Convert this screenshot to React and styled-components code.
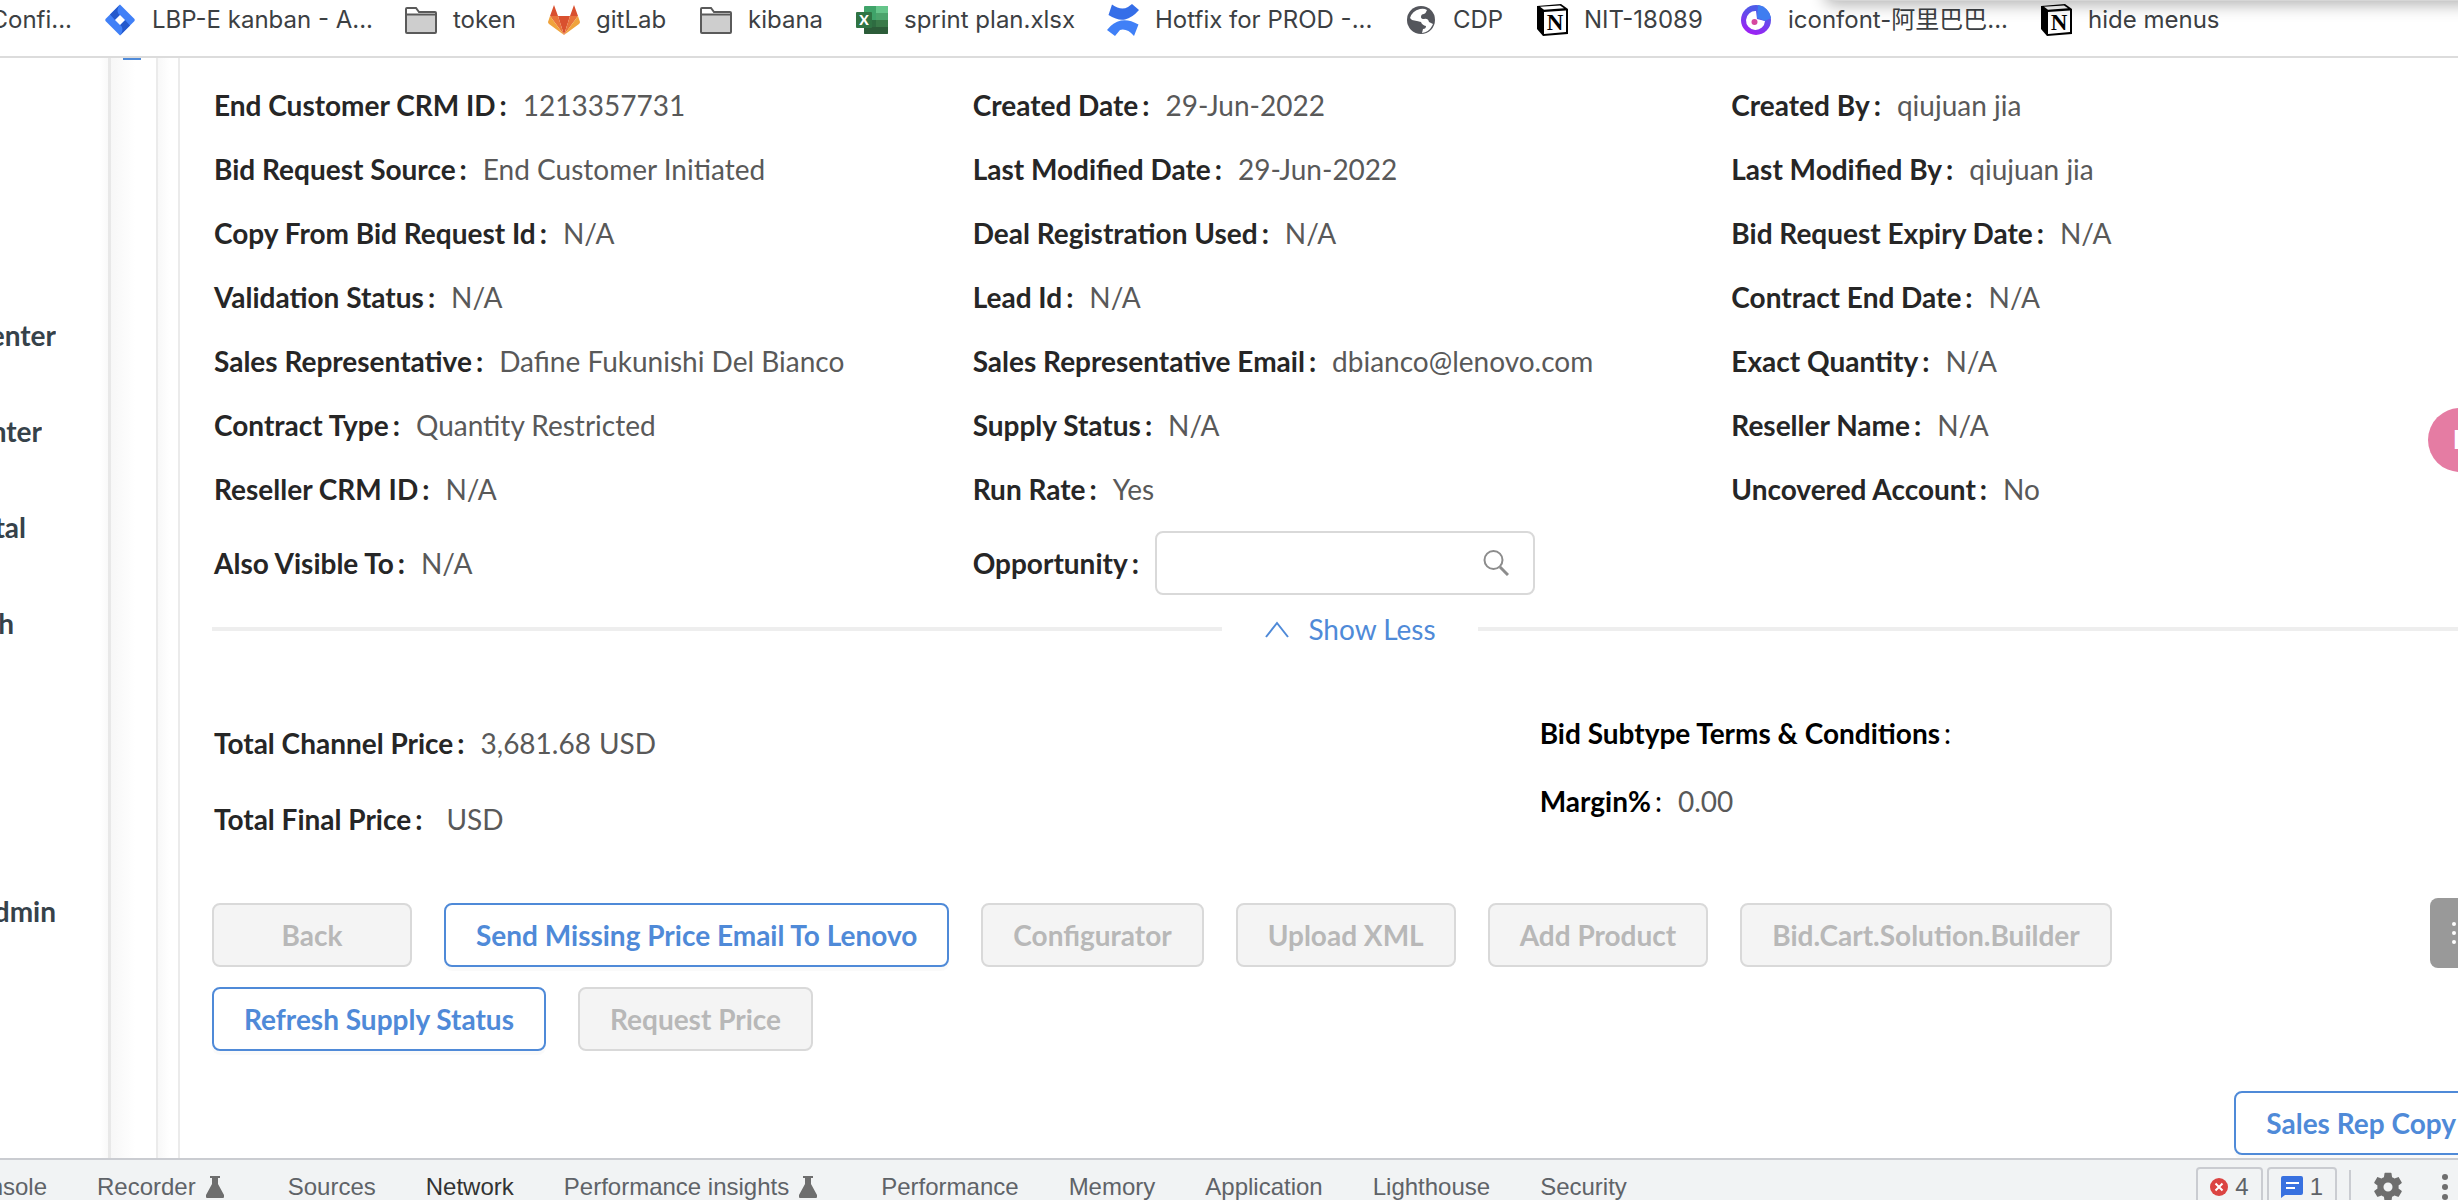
import styled, { createGlobalStyle } from "styled-components";

const GlobalStyle = createGlobalStyle`
  * {
    box-sizing: border-box;
  }

  body {
    margin: 0;
    background: #fff;
    font-family: Lato, "Noto Sans CJK SC", sans-serif;
    font-size: 28px;
    overflow: hidden;
  }
`;

const Shell = styled.div`
  position: relative;
  display: flex;
  flex-direction: column;
  height: 100vh;
  overflow: hidden;
`;

/* bookmarks */

const BookmarkBar = styled.nav`
  display: flex;
  flex: none;
  gap: 32px;
  height: 58px;
  padding-bottom: 16px;
  border-bottom: 2px solid #dcdcdc;
  overflow: hidden;
`;

const BookmarkLink = styled.a`
  display: flex;
  flex: none;
  align-items: center;
  gap: 16px;
  width: ${(props) => props.$width}px;
  color: #3c4043;
  font-family: Inter, "Noto Sans CJK SC", sans-serif;
  font-size: 24px;
  line-height: 40px;
  text-decoration: none;
  white-space: nowrap;

  svg {
    flex: none;
    width: 32px;
    height: 32px;
  }
`;

const BookmarkText = styled.span`
  display: flex;
  justify-content: flex-end;
  width: ${(props) => (props.$clipped ? "100%" : "auto")};
`;

const PopupShadow = styled.div`
  position: absolute;
  top: -20px;
  right: -20px;
  left: 1824px;
  height: 21px;
  border-radius: 12px;
  background: #d6d6d6;
  box-shadow: 0 4px 16px rgba(0, 0, 0, 0.3);
`;

/* page */

const Page = styled.div`
  display: flex;
  flex: 1;
  min-height: 0;
  overflow: hidden;
`;

const Sidebar = styled.aside`
  flex: none;
  width: 108px;
  padding-top: 229px;
  background: linear-gradient(to right, #fff 100px, #f9f9f9);
`;

const SidebarLink = styled.a`
  display: flex;
  align-items: center;
  justify-content: flex-end;
  width: ${(props) => props.$end}px;
  height: 96px;
  margin-bottom: ${(props) => (props.$last ? 192 : 0)}px;
  overflow: hidden;
  color: #36424a;
  font-weight: 700;
  text-decoration: none;
`;

const Gutter = styled.div`
  flex: none;
  width: 48px;
  padding-left: 12px;
  border-left: 3px solid #e8e8e8;
  background: linear-gradient(to right, #f7f7f7, #fff 24px);
`;

const GutterMark = styled.div`
  width: 18px;
  height: 2px;
  background: #4f8ad8;
`;

const CardEdge = styled.div`
  flex: none;
  width: 22px;
  border-left: 2px solid #ebebeb;
  background: linear-gradient(to right, #f8f8f8, #fff 12px);
`;

const Content = styled.main`
  flex: 1;
  min-width: 0;
  margin-right: -30px;
  padding: 15px 0 0 32px;
  border-left: 2px solid #ebebeb;
`;

const FieldGrid = styled.dl`
  display: grid;
  grid-template-columns: repeat(3, 1fr);
  margin: 0;
`;

const FieldRow = styled.div`
  display: flex;
  align-items: center;
  height: 64px;
  margin-top: ${(props) => (props.$spaced ? 10 : 0)}px;
  padding-left: ${(props) => (props.$flush ? 0 : 2)}px;
  white-space: nowrap;
`;

const FieldLabel = styled.dt`
  color: ${(props) => (props.$dark ? "#000" : "#262626")};
  font-weight: 700;
`;

const Colon = styled.span`
  margin: 0 16px 0 4px;
  font-weight: ${(props) => (props.$light ? 400 : 700)};
`;

const FieldValue = styled.dd`
  margin: 0;
  color: #595959;
`;

const Unit = styled.span`
  margin-left: 8px;
`;

const SearchBox = styled.div`
  display: flex;
  align-items: center;
  width: 380px;
  height: 64px;
  padding-right: 24px;
  border: 2px solid #d9d9d9;
  border-radius: 8px;
`;

const SearchInput = styled.input`
  flex: 1;
  min-width: 0;
  height: 100%;
  padding: 0 20px;
  border: 0;
  outline: 0;
  background: none;
  font: inherit;
`;

const Divider = styled.div`
  display: flex;
  align-items: center;
  gap: 42px;
  height: 68px;

  &::before,
  &::after {
    content: "";
    flex: 1;
    height: 4px;
    background: #eee;
  }
`;

const ToggleButton = styled.button`
  display: flex;
  align-items: center;
  gap: 18px;
  padding: 0;
  border: 0;
  background: none;
  color: #4f8ad8;
  font: inherit;
`;

const Totals = styled.dl`
  display: grid;
  grid-template-columns: 7fr 5fr;
  margin: 38px 0 0;
`;

const TotalsColumn = styled.div`
  display: flex;
  flex-direction: column;
  gap: ${(props) => props.$gap}px;
`;

const Actions = styled.div`
  display: flex;
  flex-wrap: wrap;
  gap: 20px 32px;
  max-width: 1960px;
  margin-top: 52px;
`;

const ActionButton = styled.button`
  min-width: 200px;
  height: 64px;
  padding: 0 30px;
  border: 2px solid #4f8ad8;
  border-radius: 8px;
  background: #fff;
  box-shadow: 0 4px 0 rgba(0, 0, 0, 0.02);
  color: #4f8ad8;
  font: inherit;
  font-weight: 700;
  white-space: nowrap;

  &:disabled {
    border-color: #d9d9d9;
    background: #f4f4f4;
    box-shadow: none;
    color: #b8b8b8;
  }
`;

const CopyRow = styled.div`
  display: flex;
  justify-content: flex-end;
  margin-top: 40px;
`;

const Avatar = styled.button`
  position: absolute;
  top: 408px;
  right: -34px;
  width: 64px;
  height: 64px;
  padding: 0 0 0 25px;
  border: 0;
  border-radius: 50%;
  background: #e57ca3;
  color: #fff;
  font: 700 28px "Liberation Sans", sans-serif;
  text-align: left;
`;

const DragTab = styled.button`
  position: absolute;
  top: 898px;
  right: -20px;
  display: flex;
  align-items: center;
  width: 48px;
  height: 70px;
  padding: 0 0 0 20px;
  border: 0;
  border-radius: 8px;
  background: #999;
`;

/* devtools */

const DevTools = styled.footer`
  display: flex;
  flex: none;
  height: 42px;
  border-top: 2px solid #caccd1;
  background: #f1f3f4;
  color: #5f6368;
  font-family: "Liberation Sans", sans-serif;
  font-size: 24px;
  overflow: hidden;
`;

const DevTab = styled.button`
  display: flex;
  flex: none;
  align-items: center;
  justify-content: ${(props) => (props.$width ? "flex-end" : "flex-start")};
  gap: 10px;
  width: ${(props) => (props.$width ? `${props.$width}px` : "auto")};
  height: 54px;
  padding: 0 25px;
  border: 0;
  background: none;
  color: ${(props) => (props.$active ? "#333" : "#5f6368")};
  font: inherit;
  white-space: nowrap;
  overflow: hidden;

  svg {
    margin-right: 14px;
  }
`;

const DevToolsStatus = styled.div`
  display: flex;
  align-items: center;
  gap: 4px;
  height: 54px;
  margin-left: auto;
  padding-right: 9px;
`;

const Counter = styled.button`
  display: flex;
  align-items: center;
  gap: 7px;
  height: 40px;
  padding: 0 12px;
  border: 2px solid #caccd1;
  border-radius: 4px;
  background: none;
  color: #5f6368;
  font: inherit;
`;

const Separator = styled.div`
  width: 2px;
  height: 34px;
  margin: 0 16px 0 8px;
  background: #caccd1;
`;

const IconGroup = styled.div`
  display: flex;
  align-items: center;
  gap: 36px;
`;

const IconButton = styled.button`
  display: flex;
  padding: 0;
  border: 0;
  background: none;
`;

const JiraIcon = () => (
  <svg viewBox="0 0 32 32">
    <path d="M16 0.500 L30.500 15 Q31 16 30.500 17 L16 31.500 L1.500 17 Q1 16 1.500 15 Z" fill="#4080f7" />
    <path d="M16 0.500 C12.500 5 13 9 16 11 L11 16 L6 10.500 Z" fill="#2459cc" />
    <path d="M16 31.500 C19.500 27 19 23 16 21 L21 16 L26 21.500 Z" fill="#2459cc" />
    <path d="M16 11l5 5-5 5-5-5z" fill="#fff" />
  </svg>
);

const FolderIcon = () => (
  <svg viewBox="0 0 32 32">
    <path d="M1 28V5q0-1 1-1h9l3 4h16q1 0 1 1v19q0 1-1 1H2q-1 0-1-1z" fill="#fff" stroke="#5a5a5a" strokeWidth="2" />
    <path d="M2 11h28v17H2z" fill="#cecece" />
    <path d="M1 10.500h30" stroke="#5a5a5a" strokeWidth="2" />
  </svg>
);

const GitlabIcon = () => (
  <svg viewBox="0 0 32 32">
    <path d="M16 31L10 12h12z" fill="#d9502f" />
    <path d="M16 31L2 12h8zM16 31l14-19h-8z" fill="#e9743a" />
    <path d="M2 12L0 18q0 1 1 2l15 11zM30 12l2 6q0 1-1 2L16 31z" fill="#f0a33c" />
    <path d="M2 12L6 1l4 11zM30 12L26 1l-4 11z" fill="#d9502f" />
  </svg>
);

const ExcelIcon = () => (
  <svg viewBox="0 0 32 32">
    <rect x="8" y="2" width="24" height="28" rx="1" fill="#3fa369" />
    <path d="M20 2h11q1 0 1 1v6H20z" fill="#65c58a" />
    <path d="M20 9h12v7H20z" fill="#4ca46c" />
    <path d="M8 16h12v7H8z" fill="#2e6c41" />
    <path d="M20 16h12v7H20z" fill="#3a7a49" />
    <path d="M8 23h24v6q0 1-1 1H9q-1 0-1-1z" fill="#2c5c39" />
    <rect x="0" y="8" width="16" height="16" rx="1" fill="#2f7444" />
    <text x="8" y="21" fill="#fff" fontFamily="Lato, sans-serif" fontSize="14" fontWeight="900" textAnchor="middle">
      X
    </text>
  </svg>
);

const ConfluenceIcon = () => (
  <svg viewBox="0 0 32 32">
    <path d="M5 0.500 Q14 7 21 3 L25 0 L32 6 Q25 14 18 15.500 Q11 17 1.500 11 Z" fill="#356ee8" />
    <path d="M27 32 Q20 24 13 26 L8 32 L0 26 Q6 18 14 16.500 Q22 15 31.500 20.500 Z" fill="#4080f7" />
  </svg>
);

const GlobeIcon = () => (
  <svg viewBox="0 0 32 32">
    <circle cx="16" cy="16" r="14" fill="#54565c" />
    <path d="M15 5q4-1 7 1-1 3-3 4-3 0-3 3 0 2 3 2 4-1 5 3l4 2-1 2q-3 6-10 7l1-4q3 0 3-3-4-1-5-4-4-1-9-2L5 14q2-7 10-9z" fill="#fff" />
    <path d="M6 17l8 1 2 4q-1 2-2 5-7-2-8-10z" fill="#54565c" />
  </svg>
);

const NotionIcon = () => (
  <svg viewBox="0 0 32 32">
    <path d="M1 2L25 0l7 5v25L7 32l-6-7z" fill="#000" />
    <path d="M4 2.800L24 1.400l4 2.800L8 5.800zM8 8l22-1.400V28L8 30z" fill="#fff" />
    <text x="19" y="26" fill="#000" fontFamily="Liberation Serif, serif" fontSize="23" fontWeight="700" textAnchor="middle">
      N
    </text>
  </svg>
);

const IconfontIcon = () => (
  <svg viewBox="0 0 32 32">
    <defs>
      <linearGradient id="ring" x1="0.7" y1="0" x2="0.3" y2="1">
        <stop offset="0.2" stopColor="#4e5be8" />
        <stop offset="1" stopColor="#a31cf5" />
      </linearGradient>
    </defs>
    <circle cx="16" cy="16" r="15" fill="url(#ring)" />
    <path d="M16 7a9.500 9.500 0 1 0 9 10l-8-2z" fill="#fff" />
    <path d="M18 1q11 2 13 13l-6 3-8-3z" fill="#3f7df0" />
    <circle cx="14.500" cy="18" r="3" fill="#d6479f" />
  </svg>
);

const FlaskIcon = () => (
  <svg width="18" height="22" viewBox="0 0 18 22">
    <path d="M4 0h10v2h-2v6l6 11v2q0 1-1 1H1q-1 0-1-1v-2L6 8V2H4z" fill="#6e6e6e" />
  </svg>
);

const SearchIcon = () => (
  <svg width="26" height="26" viewBox="0 0 26 26" fill="none" stroke="#8c8c8c" strokeWidth="2">
    <circle cx="10.500" cy="10" r="9" />
    <path d="M17 17l8 8" strokeWidth="3" />
  </svg>
);

const ChevronUp = () => (
  <svg width="26" height="20" viewBox="0 0 26 20" fill="none" stroke="#4f8ad8" strokeWidth="2">
    <path d="M2 18L13 4l11 14" />
  </svg>
);

const ErrorIcon = () => (
  <svg width="18" height="18" viewBox="0 0 18 18">
    <circle cx="9" cy="9" r="9" fill="#db4442" />
    <path d="M5.500 5.500l7 7m0-7l-7 7" stroke="#fff" strokeWidth="2" />
  </svg>
);

const IssueIcon = () => (
  <svg width="22" height="22" viewBox="0 0 22 22">
    <path d="M2 0h18q2 0 2 2v15q0 2-2 2H4l-4 3V2q0-2 2-2z" fill="#3871e0" />
    <path d="M5 7h13M5 12h9" stroke="#fff" strokeWidth="2" />
  </svg>
);

const GearIcon = () => (
  <svg width="34" height="34" viewBox="0 0 24 24">
    <path
      fill="#6e6e6e"
      d="M19.430 12.980c.04-.32.07-.64.07-.98s-.03-.66-.07-.98l2.110-1.650c.19-.15.24-.42.12-.64l-2-3.460c-.12-.22-.39-.3-.61-.22l-2.490 1c-.52-.4-1.080-.73-1.690-.98l-.38-2.650A.488.488 0 0 0 14 2h-4c-.25 0-.46.18-.49.42l-.38 2.650c-.61.25-1.170.59-1.690.98l-2.490-1c-.23-.09-.49 0-.61.22l-2 3.460c-.13.22-.07.49.12.64l2.110 1.650c-.04.32-.07.65-.07.98s.03.66.07.98l-2.110 1.650c-.19.15-.24.42-.12.64l2 3.460c.12.22.39.3.61.22l2.490-1c.52.4 1.080.73 1.690.98l.38 2.650c.03.24.24.42.49.42h4c.25 0 .46-.18.49-.42l.38-2.650c.61-.25 1.170-.59 1.690-.98l2.490 1c.23.09.49 0 .61-.22l2-3.460c.12-.22.07-.49-.12-.64l-2.110-1.650zM12 15.200a3.200 3.200 0 1 1 0-6.400 3.200 3.200 0 0 1 0 6.400z"
    />
  </svg>
);

const MoreIcon = () => (
  <svg width="8" height="28" viewBox="0 0 8 28" fill="#6e6e6e">
    <circle cx="4" cy="4" r="3" />
    <circle cx="4" cy="14" r="3" />
    <circle cx="4" cy="24" r="3" />
  </svg>
);

const DotsIcon = () => (
  <svg width="8" height="24" viewBox="0 0 8 24" fill="#fff">
    <circle cx="4" cy="3" r="2" />
    <circle cx="4" cy="12" r="2" />
    <circle cx="4" cy="21" r="2" />
  </svg>
);

const bookmarks = [
  { text: "Confi...", width: 72, clipped: true },
  { text: "LBP-E kanban - A...", icon: JiraIcon, width: 269 },
  { text: "token", icon: FolderIcon, width: 111 },
  { text: "gitLab", icon: GitlabIcon, width: 120 },
  { text: "kibana", icon: FolderIcon, width: 124 },
  { text: "sprint plan.xlsx", icon: ExcelIcon, width: 219 },
  { text: "Hotfix for PROD -...", icon: ConfluenceIcon, width: 266 },
  { text: "CDP", icon: GlobeIcon, width: 99 },
  { text: "NIT-18089", icon: NotionIcon, width: 172 },
  { text: "iconfont-阿里巴巴...", icon: IconfontIcon, width: 268 },
  { text: "hide menus", icon: NotionIcon, width: 180 },
];

const sidebarLinks = [
  { text: "enter", end: 56 },
  { text: "nter", end: 42 },
  { text: "tal", end: 26 },
  { text: "h", end: 14, last: true },
  { text: "dmin", end: 56 },
];

const fields = [
  ["End Customer CRM ID", "1213357731"],
  ["Created Date", "29-Jun-2022"],
  ["Created By", "qiujuan jia"],
  ["Bid Request Source", "End Customer Initiated"],
  ["Last Modified Date", "29-Jun-2022"],
  ["Last Modified By", "qiujuan jia"],
  ["Copy From Bid Request Id", "N/A"],
  ["Deal Registration Used", "N/A"],
  ["Bid Request Expiry Date", "N/A"],
  ["Validation Status", "N/A"],
  ["Lead Id", "N/A"],
  ["Contract End Date", "N/A"],
  ["Sales Representative", "Dafine Fukunishi Del Bianco"],
  ["Sales Representative Email", "dbianco@lenovo.com"],
  ["Exact Quantity", "N/A"],
  ["Contract Type", "Quantity Restricted"],
  ["Supply Status", "N/A"],
  ["Reseller Name", "N/A"],
  ["Reseller CRM ID", "N/A"],
  ["Run Rate", "Yes"],
  ["Uncovered Account", "No"],
];

const actions = [
  { text: "Back", disabled: true },
  { text: "Send Missing Price Email To Lenovo" },
  { text: "Configurator", disabled: true },
  { text: "Upload XML", disabled: true },
  { text: "Add Product", disabled: true },
  { text: "Bid.Cart.Solution.Builder", disabled: true },
  { text: "Refresh Supply Status" },
  { text: "Request Price", disabled: true },
];

const devTabs = [
  { text: "nsole", width: 72 },
  { text: "Recorder", flask: true },
  { text: "Sources" },
  { text: "Network", active: true },
  { text: "Performance insights", flask: true },
  { text: "Performance" },
  { text: "Memory" },
  { text: "Application" },
  { text: "Lighthouse" },
  { text: "Security" },
];

const Field = ({ label, value, unit, dark, spaced }) => {
  return (
    <FieldRow $spaced={spaced} $flush={dark}>
      <FieldLabel $dark={dark}>
        {label}
        <Colon $light={dark}>:</Colon>
      </FieldLabel>
      <FieldValue>
        {value}
        {unit && <Unit>{unit}</Unit>}
      </FieldValue>
    </FieldRow>
  );
};

const Bookmark = ({ bookmark }) => {
  const Icon = bookmark.icon;
  return (
    <BookmarkLink href="#" $width={bookmark.width}>
      {Icon && <Icon />}
      <BookmarkText $clipped={bookmark.clipped}>{bookmark.text}</BookmarkText>
    </BookmarkLink>
  );
};

const App = () => {
  return (
    <Shell>
      <GlobalStyle />
      <BookmarkBar>
        {bookmarks.map((bookmark) => (
          <Bookmark key={bookmark.text} bookmark={bookmark} />
        ))}
      </BookmarkBar>
      <PopupShadow />

      <Page>
        <Sidebar>
          {sidebarLinks.map((link) => (
            <SidebarLink key={link.text} href="#" $end={link.end} $last={link.last}>
              {link.text}
            </SidebarLink>
          ))}
        </Sidebar>
        <Gutter>
          <GutterMark />
        </Gutter>
        <CardEdge />
        <Content>
          <FieldGrid>
            {fields.map(([label, value]) => (
              <Field key={label} label={label} value={value} />
            ))}
            <Field label="Also Visible To" value="N/A" spaced />
            <FieldRow $spaced>
              <FieldLabel as="label" htmlFor="opportunity">
                Opportunity<Colon>:</Colon>
              </FieldLabel>
              <SearchBox>
                <SearchInput id="opportunity" type="text" />
                <SearchIcon />
              </SearchBox>
            </FieldRow>
          </FieldGrid>

          <Divider>
            <ToggleButton>
              <ChevronUp />
              Show Less
            </ToggleButton>
          </Divider>

          <Totals>
            <TotalsColumn $gap={12}>
              <Field label="Total Channel Price" value="3,681.68" unit="USD" spaced />
              <Field label="Total Final Price" unit="USD" />
            </TotalsColumn>
            <TotalsColumn $gap={4}>
              <Field label="Bid Subtype Terms & Conditions" dark />
              <Field label="Margin%" value="0.00" dark />
            </TotalsColumn>
          </Totals>

          <Actions>
            {actions.map((action) => (
              <ActionButton key={action.text} disabled={action.disabled}>
                {action.text}
              </ActionButton>
            ))}
          </Actions>
          <CopyRow>
            <ActionButton>Sales Rep Copy</ActionButton>
          </CopyRow>
        </Content>
      </Page>

      <Avatar>I</Avatar>
      <DragTab aria-label="Open panel">
        <DotsIcon />
      </DragTab>

      <DevTools>
        {devTabs.map((tab) => (
          <DevTab key={tab.text} $width={tab.width} $active={tab.active}>
            {tab.text}
            {tab.flask && <FlaskIcon />}
          </DevTab>
        ))}
        <DevToolsStatus>
          <Counter>
            <ErrorIcon />4
          </Counter>
          <Counter>
            <IssueIcon />1
          </Counter>
          <Separator />
          <IconGroup>
            <IconButton aria-label="Settings">
              <GearIcon />
            </IconButton>
            <IconButton aria-label="More options">
              <MoreIcon />
            </IconButton>
          </IconGroup>
        </DevToolsStatus>
      </DevTools>
    </Shell>
  );
};

export default App;
